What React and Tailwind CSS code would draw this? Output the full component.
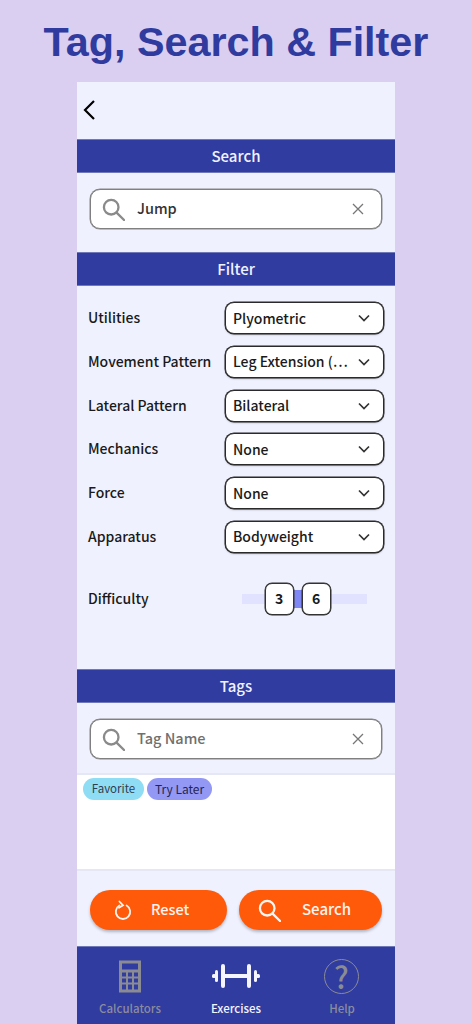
import React from "react";

const SearchIcon = ({ className }) => (
  <svg viewBox="0 0 24 24" fill="none" stroke="currentColor" strokeWidth="2.4" strokeLinecap="round" className={className}>
    <circle cx="9.6" cy="9.6" r="7.6" />
    <path d="M15.2 15.2L23 23" />
  </svg>
);

const CloseIcon = () => (
  <svg viewBox="0 0 12 12" fill="none" stroke="#777" strokeWidth="1.3" className="h-[12px] w-[12px]">
    <path d="M1 1L11 11M11 1L1 11" />
  </svg>
);

const SectionBar = ({ title }) => (
  <div className="flex h-[34px] items-center justify-center border-y border-[#6f78b8] bg-[#303c9f] pt-[1px] text-[15px] font-medium text-[#f0f2ff]">
    {title}
  </div>
);

const SearchInput = ({ value, muted }) => (
  <div className="flex h-[40px] w-[292px] items-center rounded-[10px] border border-[#808080] bg-white pl-[11px] pr-[17px] shadow-[0_0_0_0.5px_#8a8a8a]">
    <SearchIcon className="h-[23px] w-[23px] text-[#8a8a8a]" />
    <span className={`ml-[12px] flex-1 pb-[2px] text-[14.5px] font-medium ${muted ? "text-[#707070]" : "text-[#333]"}`}>{value}</span>
    <CloseIcon />
  </div>
);

const filters = [
  ["Utilities", "Plyometric"],
  ["Movement Pattern", "Leg Extension (…"],
  ["Lateral Pattern", "Bilateral"],
  ["Mechanics", "None"],
  ["Force", "None"],
  ["Apparatus", "Bodyweight"],
];

const FilterRow = ({ label, value }) => (
  <div className="flex h-[32px] items-center justify-between px-[11px]">
    <span className="pb-[1px] text-[14px] font-medium text-[#1a1a1a]">{label}</span>
    <div className="flex h-[32px] w-[159px] items-center justify-between rounded-[9px] border border-[#2a2a2a] bg-white pl-[7px] pr-[13px] shadow-[0_0_0_0.5px_#2a2a2a,0_1px_2px_rgba(0,0,0,0.25)]">
      <span className="text-[14px] font-medium whitespace-nowrap text-[#1a1a1a]">{value}</span>
      <svg viewBox="0 0 12 8" fill="none" stroke="#333" strokeWidth="1.7" className="h-[8px] w-[12px] shrink-0">
        <path d="M1 1.5L6 6.5L11 1.5" />
      </svg>
    </div>
  </div>
);

const Thumb = ({ value, className }) => (
  <div className={`absolute top-0 flex h-[32px] w-[29px] items-center justify-center rounded-[7px] border border-[#333] bg-white text-[14px] font-bold text-[#1a1a1a] shadow-[0_0_0_0.5px_#333] ${className}`}>
    {value}
  </div>
);

const CalculatorIcon = () => (
  <svg viewBox="0 0 22 32" className="h-[33px] w-[22px]" fill="#8b8b93">
    <path fillRule="evenodd" d="M0 0H22V32H0ZM3 3V9H19V3ZM3 12V16H7V12ZM9 12V16H13V12ZM15 12V16H19V12ZM3 18V22H7V18ZM9 18V22H13V18ZM15 18V22H19V18ZM3 24V29H7V24ZM9 24V29H13V24ZM15 24V29H19V24Z" />
  </svg>
);

const DumbbellIcon = () => (
  <svg viewBox="0 0 48 24" className="h-[24px] w-[48px]" fill="#f4f5ff">
    <rect x="0" y="10" width="4" height="4" rx="1.5" />
    <rect x="3" y="6" width="3" height="12" rx="1.5" />
    <rect x="9" y="0" width="4" height="24" rx="2" />
    <rect x="13" y="10" width="22" height="4" />
    <rect x="35" y="0" width="4" height="24" rx="2" />
    <rect x="42" y="6" width="3" height="12" rx="1.5" />
    <rect x="44" y="10" width="4" height="4" rx="1.5" />
  </svg>
);

const HelpIcon = () => (
  <div className="mr-[1px] flex h-[35px] w-[35px] items-center justify-center rounded-full border border-[#8b8b93] text-[30px] leading-none font-medium text-[#8b8b93]">
    ?
  </div>
);

const NavItem = ({ icon, label, active }) => (
  <div className="flex w-[106px] flex-col items-center">
    <div className="flex h-[38px] items-center justify-center">{icon}</div>
    <span className={`mt-[4px] text-[11.5px] leading-[18px] font-medium ${active ? "text-[#f4f5ff]" : "text-[#8b8b9f]"}`}>{label}</span>
  </div>
);

export default function App() {
  return (
    <div className="flex h-[1024px] w-[472px] flex-col items-center overflow-hidden bg-[#dacff0] font-['Noto_Sans_CJK_JP','Noto_Sans',sans-serif]">
      <h1 className="flex h-[82px] items-center pt-[4px] font-['Liberation_Sans',sans-serif] text-[41.3px] font-bold whitespace-nowrap text-[#2f3b9f]">
        Tag, Search &amp; Filter
      </h1>

      <div className="flex w-[318px] flex-1 flex-col bg-[#eff1ff]">
        <div className="flex h-[57px] items-center pl-[6px]">
          <svg viewBox="0 0 12 20" fill="none" stroke="#000" strokeWidth="2.2" className="mb-[2px] h-[20px] w-[12px]">
            <path d="M11 1L2 10L11 19" />
          </svg>
        </div>

        <SectionBar title="Search" />
        <div className="flex h-[79px] items-start pt-[16px] pl-[13px]">
          <SearchInput value="Jump" />
        </div>

        <SectionBar title="Filter" />
        <div className="flex h-[383px] flex-col">
          <div className="flex flex-col gap-[11.8px] pt-[16px]">
            {filters.map(([label, value]) => (
              <FilterRow key={label} label={label} value={value} />
            ))}
          </div>
          <div className="mt-[30px] flex h-[32px] items-center pl-[11px]">
            <span className="text-[14px] font-medium text-[#1a1a1a]">Difficulty</span>
            <div className="relative ml-[93px] h-[32px] w-[125px]">
              <div className="absolute top-[11px] h-[10px] w-full bg-[#e0e2ff]" />
              <div className="absolute top-[7px] left-[52px] h-[18px] w-[8px] bg-[#7f86f5]" />
              <Thumb value="3" className="left-[23px]" />
              <Thumb value="6" className="left-[60px]" />
            </div>
          </div>
        </div>

        <SectionBar title="Tags" />
        <div className="flex h-[70px] items-start pt-[16px] pl-[13px]">
          <SearchInput value="Tag Name" muted />
        </div>
        <div className="flex h-[98px] items-start gap-[3px] border-y-2 border-[#e6e7f5] bg-white pt-[3px] pl-[6px]">
          <span className="flex h-[22px] w-[61px] items-center justify-center rounded-full bg-[#8fdcf5] pb-[1px] text-[11.5px] text-[#2f3e4f]">Favorite</span>
          <span className="flex h-[22px] w-[65px] items-center justify-center rounded-full bg-[#9498f5] pb-[1px] text-[12px] text-[#23264f]">Try Later</span>
        </div>

        <div className="flex h-[75px] items-start gap-[12px] pt-[19px] pl-[13px]">
          <button className="flex h-[40px] w-[137px] items-center rounded-full bg-[#ff5a0a] pl-[24px] text-[14.5px] font-medium text-[#fff4ee] shadow-[0_2px_3px_rgba(0,0,0,0.25)]">
            <svg viewBox="0 0 20 22" fill="none" stroke="currentColor" strokeWidth="2" strokeLinecap="round" className="h-[21px] w-[18px]">
              <path d="M6 5.5A8 8 0 1 0 14 5.5" />
              <path d="M6 1L10 5.2L5.5 8" />
            </svg>
            <span className="ml-[19px] pb-[2px]">Reset</span>
          </button>
          <button className="flex h-[40px] w-[143px] items-center rounded-full bg-[#ff5a0a] pl-[19px] text-[15px] font-medium text-[#fff4ee] shadow-[0_2px_3px_rgba(0,0,0,0.25)]">
            <SearchIcon className="h-[23px] w-[23px]" />
            <span className="ml-[21px] pb-[1px]">Search</span>
          </button>
        </div>

        <div className="flex flex-1 items-start justify-between border-t border-[#6f78b8] bg-[#303c9f] pt-[10px]">
          <NavItem icon={<CalculatorIcon />} label="Calculators" />
          <NavItem icon={<DumbbellIcon />} label="Exercises" active />
          <NavItem icon={<HelpIcon />} label="Help" />
        </div>
      </div>
    </div>
  );
}
